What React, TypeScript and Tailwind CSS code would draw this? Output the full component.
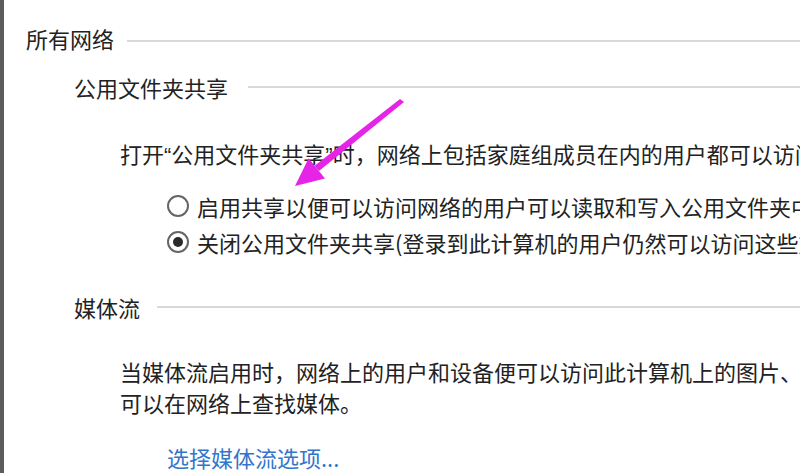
const font = { fontFamily: '"Noto Sans CJK SC", "Noto Sans", sans-serif' };
const latin = { fontFamily: '"Liberation Sans", sans-serif' };

function Heading({ title, lineGap, lineOffset }: { title: string; lineGap: string; lineOffset: string }) {
  return (
    <div className="flex items-center h-[32px] leading-[32px]">
      <span className="shrink-0">{title}</span>
      <div className={`flex-1 h-[2px] bg-[#d9d9d9] ${lineGap} ${lineOffset}`} />
    </div>
  );
}

function Radio({ checked, label }: { checked?: boolean; label: string }) {
  return (
    <div className="flex items-center h-[36px] leading-[36px] whitespace-nowrap">
      <span className="shrink-0 -ml-[1px] w-[22px] h-[22px] rounded-full border-2 border-[#666666] bg-white flex items-center justify-center">
        {checked && <span className="w-[10px] h-[10px] rounded-full bg-[#2a2a2a]" />}
      </span>
      <span className="ml-[8px]">{label}</span>
    </div>
  );
}

export default function App() {
  return (
    <div className="relative w-[800px] h-[473px] overflow-hidden flex bg-white text-[22px] text-[#222222]" style={font}>
      <div className="w-[4px] shrink-0 bg-[#5c5c5c]" />
      <div className="flex-1 min-w-0 pt-[22px] pl-[22px] whitespace-nowrap">
        <Heading title="所有网络" lineGap="ml-[13px]" lineOffset="mt-[6px]" />

        <div className="pl-[48px] mt-[17px]">
          <Heading title="公用文件夹共享" lineGap="ml-[20px]" lineOffset="mt-0" />

          <div className="pl-[46px]">
            <p className="mt-[34px] h-[32px] leading-[32px]">
              打开<span style={latin}>“</span>公用文件夹共享<span style={latin}>”</span>时，网络上包括家庭组成员在内的用户都可以访问公用文件夹中的文件。
            </p>
            <div className="mt-[19px] pl-[48px]">
              <Radio label="启用共享以便可以访问网络的用户可以读取和写入公用文件夹中的文件" />
              <Radio checked label="关闭公用文件夹共享(登录到此计算机的用户仍然可以访问这些文件夹)" />
            </div>
          </div>

          <div className="mt-[31px]">
            <Heading title="媒体流" lineGap="ml-[17px]" lineOffset="mt-0" />
          </div>

          <div className="pl-[46px]">
            <div className="mt-[33px] leading-[31px]">
              <p>当媒体流启用时，网络上的用户和设备便可以访问此计算机上的图片、音乐以及视频。此计算机还</p>
              <p>可以在网络上查找媒体。</p>
            </div>
            <div className="mt-[23px] pl-[47px] h-[32px] leading-[32px]">
              <a className="text-[#3275cc] cursor-pointer">选择媒体流选项...</a>
            </div>
          </div>
        </div>
      </div>

      <svg className="absolute inset-0 pointer-events-none" width="800" height="473" viewBox="0 0 800 473">
        <polygon points="400,99 404,102 319,171 314.6,165.7" fill="#e524e8" />
        <polygon points="295,186 308.6,158.3 325,178.5" fill="#e524e8" />
      </svg>
    </div>
  );
}
